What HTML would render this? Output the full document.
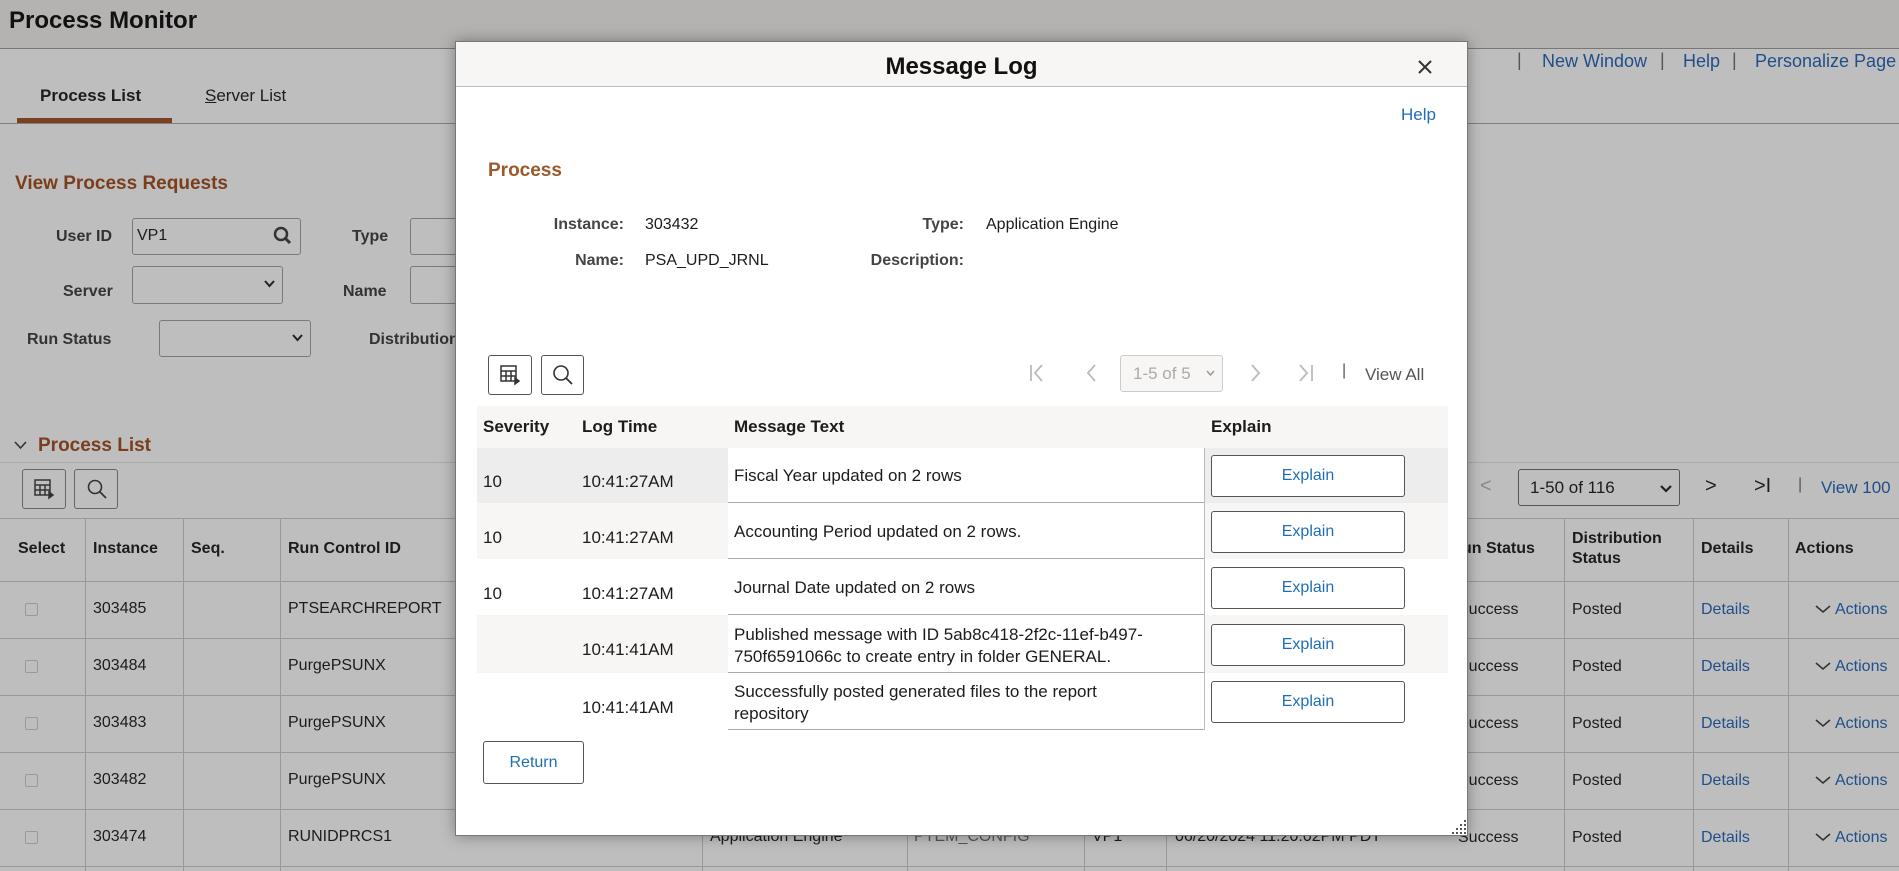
<!DOCTYPE html>
<html><head><meta charset="utf-8"><style>
*{box-sizing:border-box;margin:0;padding:0}
body{width:1899px;height:871px;overflow:hidden;background:#bebebe;font-family:"Liberation Sans",Arial,sans-serif;color:#1c1c1c;position:relative;font-size:16px}
.a{position:absolute;white-space:nowrap}
.lnk{color:#1f4f8a}
.b{font-weight:bold}
.inp{position:absolute;border:1px solid #7a7a7a;border-radius:3px;background:#bebebe}
.vl{position:absolute;width:1px;background:#999}
.hl{position:absolute;height:1px;background:#999}
.mbtn{position:absolute;border:1px solid #555;border-radius:3px;background:#fff;color:#1f6fb5;text-align:center;font-size:16px}
</style></head><body>
<div class="a" style="left:0;top:0;width:1899px;height:48px;background:#b4b3b1"></div>
<div class="a b" style="left:9px;top:7px;font-size:24px;color:#111">Process Monitor</div>
<div class="hl" style="left:0;top:48px;width:1899px;background:#777"></div>
<div class="a" style="left:40px;top:86px;font-size:17px;font-weight:bold">Process List</div>
<div class="a" style="left:205px;top:86px;font-size:17px"><u>S</u>erver List</div>
<div class="a" style="left:17px;top:118px;width:155px;height:5px;background:#7b3f22"></div>
<div class="hl" style="left:0;top:123px;width:1899px;background:#808080"></div>
<div class="a" style="left:1517px;top:50px;font-size:18px;color:#555">|</div>
<div class="a lnk" style="left:1542px;top:51px;font-size:18px">New Window</div>
<div class="a" style="left:1660px;top:50px;font-size:18px;color:#555">|</div>
<div class="a lnk" style="left:1683px;top:51px;font-size:18px">Help</div>
<div class="a" style="left:1732px;top:50px;font-size:18px;color:#555">|</div>
<div class="a lnk" style="left:1755px;top:51px;font-size:18px">Personalize Page</div>

<div class="a b" style="left:15px;top:173px;font-size:19px;color:#7a3e1c">View Process Requests</div>
<div class="a b" style="left:56px;top:228px;color:#333">User ID</div>
<div class="inp" style="left:132px;top:218px;width:169px;height:37px"></div>
<div class="a" style="left:137px;top:227px">VP1</div>
<svg class="a" style="left:273px;top:226px" width="20" height="20" viewBox="0 0 20 20"><circle cx="8" cy="8" r="6" fill="none" stroke="#333" stroke-width="2.5"/><path d="M12 12l5 5" stroke="#333" stroke-width="3"/></svg>
<div class="a b" style="left:352px;top:228px;color:#333">Type</div>
<div class="inp" style="left:410px;top:218px;width:60px;height:37px"></div>
<div class="a b" style="left:63px;top:283px;color:#333">Server</div>
<div class="inp" style="left:132px;top:266px;width:151px;height:38px"></div>
<svg class="a" style="left:264px;top:280px" width="11" height="8" viewBox="0 0 11 8"><path d="M1 1l4.5 5L10 1" fill="none" stroke="#222" stroke-width="2"/></svg>
<div class="a b" style="left:343px;top:283px;color:#333">Name</div>
<div class="inp" style="left:410px;top:266px;width:60px;height:38px"></div>
<div class="a b" style="left:27px;top:331px;color:#333">Run Status</div>
<div class="inp" style="left:159px;top:320px;width:152px;height:37px"></div>
<svg class="a" style="left:292px;top:334px" width="11" height="8" viewBox="0 0 11 8"><path d="M1 1l4.5 5L10 1" fill="none" stroke="#222" stroke-width="2"/></svg>
<div class="a b" style="left:369px;top:331px;color:#333">Distribution</div>

<svg class="a" style="left:14px;top:441px" width="13" height="9" viewBox="0 0 13 9"><path d="M1 1l5.5 6L12 1" fill="none" stroke="#333" stroke-width="1.6"/></svg>
<div class="a b" style="left:38px;top:435px;font-size:19px;color:#7a3e1c">Process List</div>
<div class="inp" style="left:22px;top:469px;width:44px;height:40px;border-color:#666"></div>
<div class="inp" style="left:74px;top:469px;width:44px;height:40px;border-color:#666"></div>
<svg class="a" style="left:33px;top:478px" width="22" height="22" viewBox="0 0 22 22" fill="none" stroke="#333" stroke-width="1.5"><rect x="2" y="2" width="15" height="15"/><path d="M2 7h15M2 12h15M7 7v10M12 7v10"/><path d="M16 14l4 3-4 3z" fill="#333"/></svg>
<svg class="a" style="left:86px;top:478px" width="22" height="22" viewBox="0 0 22 22"><circle cx="9" cy="9" r="6.5" fill="none" stroke="#333" stroke-width="1.6"/><path d="M14 14l6 6" stroke="#333" stroke-width="1.8"/></svg>
<div class="hl" style="left:0;top:462px;width:1899px;background:#aaa"></div>
<div class="a" style="left:1480px;top:475px;font-size:20px;color:#888">&lt;</div>
<div class="inp" style="left:1518px;top:469px;width:162px;height:37px;border-color:#555"></div>
<div class="a" style="left:1530px;top:478px;font-size:17px">1-50 of 116</div>
<svg class="a" style="left:1660px;top:485px" width="12" height="8" viewBox="0 0 12 8"><path d="M1 1l5 5 5-5" fill="none" stroke="#222" stroke-width="2.2"/></svg>
<div class="a" style="left:1705px;top:475px;font-size:20px">&gt;</div>
<div class="a" style="left:1754px;top:475px;font-size:20px">&gt;I</div>
<div class="a" style="left:1798px;top:476px;color:#555">|</div>
<div class="a lnk" style="left:1821px;top:478px;font-size:17px">View 100</div>

<div class="hl" style="left:0;top:518px;width:1899px"></div>
<div class="hl" style="left:0;top:581px;width:1899px"></div>
<div class="hl" style="left:0;top:638px;width:1899px"></div>
<div class="hl" style="left:0;top:695px;width:1899px"></div>
<div class="hl" style="left:0;top:752px;width:1899px"></div>
<div class="hl" style="left:0;top:809px;width:1899px"></div>
<div class="hl" style="left:0;top:866px;width:1899px"></div>
<div class="vl" style="left:85px;top:518px;height:353px"></div>
<div class="vl" style="left:183px;top:518px;height:353px"></div>
<div class="vl" style="left:280px;top:518px;height:353px"></div>
<div class="vl" style="left:702px;top:809px;height:62px"></div>
<div class="vl" style="left:907px;top:809px;height:62px"></div>
<div class="vl" style="left:1084px;top:809px;height:62px"></div>
<div class="vl" style="left:1166px;top:809px;height:62px"></div>
<div class="vl" style="left:1564px;top:518px;height:353px"></div>
<div class="vl" style="left:1693px;top:518px;height:353px"></div>
<div class="vl" style="left:1788px;top:518px;height:353px"></div>
<div class="a b" style="left:18px;top:540px">Select</div>
<div class="a b" style="left:93px;top:540px">Instance</div>
<div class="a b" style="left:191px;top:540px">Seq.</div>
<div class="a b" style="left:288px;top:540px">Run Control ID</div>
<div class="a b" style="left:1462px;top:540px">un Status</div>
<div class="a b" style="left:1572px;top:529px;line-height:20px">Distribution<br>Status</div>
<div class="a b" style="left:1701px;top:540px">Details</div>
<div class="a b" style="left:1795px;top:540px">Actions</div>
<div class="a" style="left:25px;top:603px;width:13px;height:13px;border:1px solid #999;border-radius:2px"></div>
<div class="a" style="left:93px;top:600px">303485</div><div class="a" style="left:288px;top:600px">PTSEARCHREPORT</div>
<div class="a" style="left:25px;top:660px;width:13px;height:13px;border:1px solid #999;border-radius:2px"></div>
<div class="a" style="left:93px;top:657px">303484</div><div class="a" style="left:288px;top:657px">PurgePSUNX</div>
<div class="a" style="left:25px;top:717px;width:13px;height:13px;border:1px solid #999;border-radius:2px"></div>
<div class="a" style="left:93px;top:714px">303483</div><div class="a" style="left:288px;top:714px">PurgePSUNX</div>
<div class="a" style="left:25px;top:774px;width:13px;height:13px;border:1px solid #999;border-radius:2px"></div>
<div class="a" style="left:93px;top:771px">303482</div><div class="a" style="left:288px;top:771px">PurgePSUNX</div>
<div class="a" style="left:25px;top:831px;width:13px;height:13px;border:1px solid #999;border-radius:2px"></div>
<div class="a" style="left:93px;top:828px">303474</div><div class="a" style="left:288px;top:828px">RUNIDPRCS1</div>
<div class="a" style="left:710px;top:828px">Application Engine</div>
<div class="a" style="left:914px;top:828px;color:#555">PTEM_CONFIG</div>
<div class="a" style="left:1092px;top:828px">VP1</div>
<div class="a" style="left:1175px;top:828px">06/20/2024 11:20:02PM PDT</div>
<div class="a" style="left:1458px;top:581px;line-height:57px">Success<br>Success<br>Success<br>Success<br>Success</div>
<div class="a" style="left:1572px;top:581px;line-height:57px">Posted<br>Posted<br>Posted<br>Posted<br>Posted</div>
<div class="a lnk" style="left:1701px;top:581px;line-height:57px">Details<br>Details<br>Details<br>Details<br>Details</div>
<div class="a lnk" style="left:1835px;top:581px;line-height:57px">Actions<br>Actions<br>Actions<br>Actions<br>Actions</div>
<svg class="a" style="left:1815px;top:605px" width="16" height="240" viewBox="0 0 16 240" fill="none" stroke="#333" stroke-width="1.6"><path d="M1 1l7 6 7-6M1 58l7 6 7-6M1 115l7 6 7-6M1 172l7 6 7-6M1 229l7 6 7-6"/></svg>

<!-- modal -->
<div class="a" style="left:455px;top:41px;width:1013px;height:795px;background:#fff;border:1px solid #777;box-shadow:0 0 14px rgba(0,0,0,.35)"></div>
<div class="a" style="left:456px;top:42px;width:1011px;height:45px;background:#f7f6f4;border-bottom:1px solid #bbb"></div>
<div class="a b" style="left:456px;top:53px;width:1011px;text-align:center;font-size:24px;color:#111">Message Log</div>
<svg class="a" style="left:1417px;top:59px" width="16" height="16" viewBox="0 0 16 16"><path d="M2 2l12 12M14 2L2 14" stroke="#333" stroke-width="2"/></svg>
<div class="a" style="left:1401px;top:105px;font-size:17px;color:#1f6fb5">Help</div>
<div class="a b" style="left:488px;top:160px;font-size:19px;color:#9a5a2c">Process</div>
<div class="a b" style="left:500px;top:216px;width:124px;text-align:right;color:#444">Instance:</div>
<div class="a" style="left:645px;top:216px">303432</div>
<div class="a b" style="left:500px;top:252px;width:124px;text-align:right;color:#444">Name:</div>
<div class="a" style="left:645px;top:252px">PSA_UPD_JRNL</div>
<div class="a b" style="left:800px;top:216px;width:164px;text-align:right;color:#444">Type:</div>
<div class="a" style="left:986px;top:216px">Application Engine</div>
<div class="a b" style="left:800px;top:252px;width:164px;text-align:right;color:#444">Description:</div>
<div class="mbtn" style="left:488px;top:355px;width:44px;height:40px"></div>
<div class="mbtn" style="left:541px;top:355px;width:43px;height:40px"></div>
<svg class="a" style="left:499px;top:364px" width="22" height="22" viewBox="0 0 22 22" fill="none" stroke="#333" stroke-width="1.5"><rect x="2" y="2" width="15" height="15"/><path d="M2 7h15M2 12h15M7 7v10M12 7v10"/><path d="M16 14l4 3-4 3z" fill="#333"/></svg>
<svg class="a" style="left:551px;top:363px" width="24" height="24" viewBox="0 0 24 24"><circle cx="10" cy="10" r="7" fill="none" stroke="#333" stroke-width="1.6"/><path d="M15 15l6 6" stroke="#333" stroke-width="1.8"/></svg>
<svg class="a" style="left:1028px;top:362px" width="300" height="24" viewBox="0 0 300 24" fill="none" stroke="#bbb" stroke-width="1.8"><path d="M3 3v16M14 3L7 11l7 8"/><path d="M67 3l-7 8 7 8"/><path d="M224 3l7 8-7 8"/><path d="M272 3l7 8-7 8M284 3v16"/></svg>
<div class="a" style="left:1120px;top:355px;width:103px;height:37px;border:1px solid #ccc;border-radius:3px;background:#f7f6f4"></div>
<div class="a" style="left:1133px;top:364px;font-size:17px;color:#aaa">1-5 of 5</div>
<svg class="a" style="left:1206px;top:370px" width="9" height="7" viewBox="0 0 9 7"><path d="M1 1l3.5 4L8 1" fill="none" stroke="#999" stroke-width="1.5"/></svg>
<div class="a" style="left:1342px;top:362px;color:#555">|</div>
<div class="a" style="left:1365px;top:365px;font-size:17px;color:#555">View All</div>

<div class="a" style="left:477px;top:406px;width:971px;height:42px;background:#f7f6f4"></div>
<div class="a b" style="left:483px;top:417px;font-size:17px">Severity</div>
<div class="a b" style="left:582px;top:417px;font-size:17px">Log Time</div>
<div class="a b" style="left:734px;top:417px;font-size:17px">Message Text</div>
<div class="a b" style="left:1211px;top:417px;font-size:17px">Explain</div>

<div class="a" style="left:477px;top:448px;width:971px;height:55px;background:#ededed"></div>
<div class="a" style="left:477px;top:503px;width:971px;height:56px;background:#f7f6f4"></div>
<div class="a" style="left:477px;top:615px;width:971px;height:58px;background:#f7f6f4"></div>
<div class="a" style="left:728px;top:448px;width:477px;height:282px;background:#fff;border-right:1px solid #bbb"></div>
<div class="hl" style="left:728px;top:502px;width:476px;background:#aaa"></div>
<div class="hl" style="left:728px;top:558px;width:476px;background:#aaa"></div>
<div class="hl" style="left:728px;top:614px;width:476px;background:#aaa"></div>
<div class="hl" style="left:728px;top:672px;width:476px;background:#aaa"></div>
<div class="hl" style="left:728px;top:729px;width:476px;background:#aaa"></div>

<div class="a" style="left:483px;top:472px;font-size:17px">10</div>
<div class="a" style="left:582px;top:472px;font-size:17px">10:41:27AM</div>
<div class="a" style="left:734px;top:466px;font-size:17px">Fiscal Year updated on 2 rows</div>
<div class="a" style="left:483px;top:528px;font-size:17px">10</div>
<div class="a" style="left:582px;top:528px;font-size:17px">10:41:27AM</div>
<div class="a" style="left:734px;top:522px;font-size:17px">Accounting Period updated on 2 rows.</div>
<div class="a" style="left:483px;top:584px;font-size:17px">10</div>
<div class="a" style="left:582px;top:584px;font-size:17px">10:41:27AM</div>
<div class="a" style="left:734px;top:578px;font-size:17px">Journal Date updated on 2 rows</div>
<div class="a" style="left:582px;top:640px;font-size:17px">10:41:41AM</div>
<div class="a" style="left:734px;top:624px;font-size:17px;line-height:22px">Published message with ID 5ab8c418-2f2c-11ef-b497-<br>750f6591066c to create entry in folder GENERAL.</div>
<div class="a" style="left:582px;top:698px;font-size:17px">10:41:41AM</div>
<div class="a" style="left:734px;top:681px;font-size:17px;line-height:22px">Successfully posted generated files to the report<br>repository</div>

<div class="mbtn" style="left:1211px;top:455px;width:194px;height:42px;line-height:40px">Explain</div>
<div class="mbtn" style="left:1211px;top:511px;width:194px;height:42px;line-height:40px">Explain</div>
<div class="mbtn" style="left:1211px;top:567px;width:194px;height:42px;line-height:40px">Explain</div>
<div class="mbtn" style="left:1211px;top:624px;width:194px;height:42px;line-height:40px">Explain</div>
<div class="mbtn" style="left:1211px;top:681px;width:194px;height:42px;line-height:40px">Explain</div>
<div class="mbtn" style="left:483px;top:741px;width:101px;height:43px;line-height:41px">Return</div>
<svg class="a" style="left:1450px;top:818px" width="18" height="18" viewBox="0 0 18 18" fill="#555"><rect x="14" y="2" width="2" height="2"/><rect x="10" y="6" width="2" height="2"/><rect x="14" y="6" width="2" height="2"/><rect x="6" y="10" width="2" height="2"/><rect x="10" y="10" width="2" height="2"/><rect x="14" y="10" width="2" height="2"/><rect x="2" y="14" width="2" height="2"/><rect x="6" y="14" width="2" height="2"/><rect x="10" y="14" width="2" height="2"/><rect x="14" y="14" width="2" height="2"/></svg>
</body></html>
